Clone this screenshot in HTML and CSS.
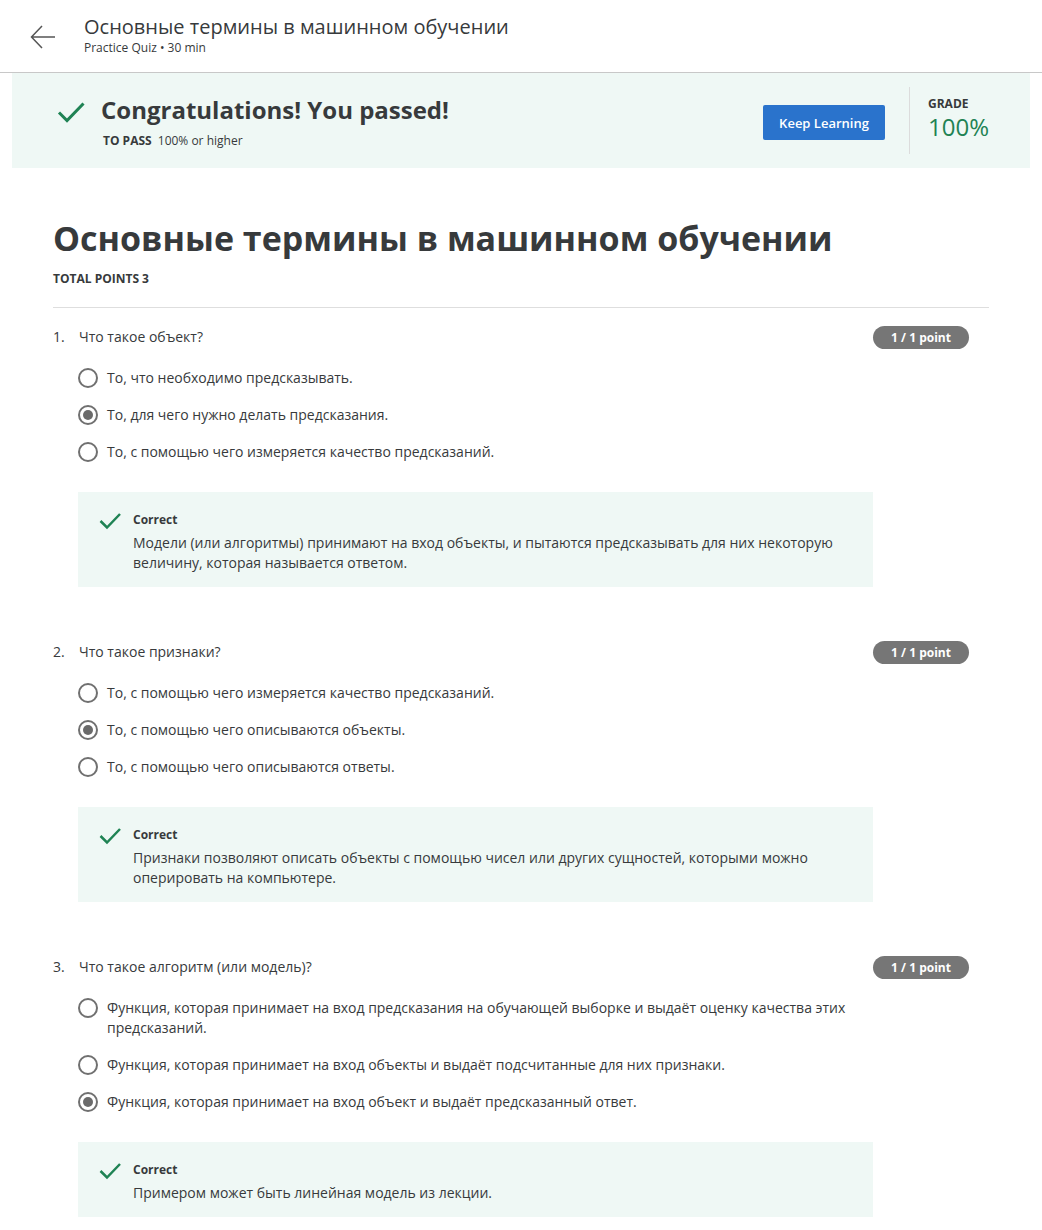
FILE: index.html
```html
<!DOCTYPE html>
<html lang="ru">
<head>
<meta charset="utf-8">
<title>Основные термины в машинном обучении</title>
<link rel="stylesheet" href="styles.css">
</head>
<body>
<header class="topbar">
  <svg class="back" width="26" height="24" viewBox="0 0 26 24"><path d="M25 12H2M12 1L1.5 12L12 23" fill="none" stroke="#555" stroke-width="1.5"/></svg>
  <div class="topbar-text">
    <div class="topbar-title">Основные термины в машинном обучении</div>
    <div class="topbar-sub">Practice Quiz • 30 min</div>
  </div>
</header>

<section class="banner">
  <div class="banner-left">
    <svg class="banner-check" width="28" height="22" viewBox="0 0 28 22"><path d="M2 11.5L10 19.5L26.5 2.5" fill="none" stroke="#1f8354" stroke-width="3"/></svg>
    <div>
      <div class="banner-title">Congratulations! You passed!</div>
      <div class="banner-sub"><b>TO PASS</b> 100% or higher</div>
    </div>
  </div>
  <div class="banner-right">
    <button class="btn">Keep Learning</button>
    <div class="grade">
      <div class="grade-label">GRADE</div>
      <div class="grade-value">100%</div>
    </div>
  </div>
</section>

<main class="content">
  <h1 class="quiz-title">Основные термины в машинном обучении</h1>
  <div class="total">TOTAL POINTS 3</div>
  <hr class="sep">

  <div class="question">
    <div class="q-row">
      <span class="q-num">1.</span>
      <span class="q-text">Что такое объект?</span>
      <span class="badge">1 / 1 point</span>
    </div>
    <div class="options">
      <div class="option"><span class="radio"></span><span class="opt-text">То, что необходимо предсказывать.</span></div>
      <div class="option"><span class="radio checked"></span><span class="opt-text">То, для чего нужно делать предсказания.</span></div>
      <div class="option"><span class="radio"></span><span class="opt-text">То, с помощью чего измеряется качество предсказаний.</span></div>
    </div>
    <div class="feedback">
      <svg class="fb-check" width="22" height="18" viewBox="0 0 22 18"><path d="M1.5 9L8 15.5L21 2" fill="none" stroke="#1f8354" stroke-width="2.5"/></svg>
      <div class="fb-body">
        <div class="fb-title">Correct</div>
        <div class="fb-text">Модели (или алгоритмы) принимают на вход объекты, и пытаются предсказывать для них некоторую величину, которая называется ответом.</div>
      </div>
    </div>
  </div>

  <div class="question">
    <div class="q-row">
      <span class="q-num">2.</span>
      <span class="q-text">Что такое признаки?</span>
      <span class="badge">1 / 1 point</span>
    </div>
    <div class="options">
      <div class="option"><span class="radio"></span><span class="opt-text">То, с помощью чего измеряется качество предсказаний.</span></div>
      <div class="option"><span class="radio checked"></span><span class="opt-text">То, с помощью чего описываются объекты.</span></div>
      <div class="option"><span class="radio"></span><span class="opt-text">То, с помощью чего описываются ответы.</span></div>
    </div>
    <div class="feedback">
      <svg class="fb-check" width="22" height="18" viewBox="0 0 22 18"><path d="M1.5 9L8 15.5L21 2" fill="none" stroke="#1f8354" stroke-width="2.5"/></svg>
      <div class="fb-body">
        <div class="fb-title">Correct</div>
        <div class="fb-text">Признаки позволяют описать объекты с помощью чисел или других сущностей, которыми можно оперировать на компьютере.</div>
      </div>
    </div>
  </div>

  <div class="question">
    <div class="q-row">
      <span class="q-num">3.</span>
      <span class="q-text">Что такое алгоритм (или модель)?</span>
      <span class="badge">1 / 1 point</span>
    </div>
    <div class="options">
      <div class="option"><span class="radio"></span><span class="opt-text">Функция, которая принимает на вход предсказания на обучающей выборке и выдаёт оценку качества этих предсказаний.</span></div>
      <div class="option"><span class="radio"></span><span class="opt-text">Функция, которая принимает на вход объекты и выдаёт подсчитанные для них признаки.</span></div>
      <div class="option"><span class="radio checked"></span><span class="opt-text">Функция, которая принимает на вход объект и выдаёт предсказанный ответ.</span></div>
    </div>
    <div class="feedback">
      <svg class="fb-check" width="22" height="18" viewBox="0 0 22 18"><path d="M1.5 9L8 15.5L21 2" fill="none" stroke="#1f8354" stroke-width="2.5"/></svg>
      <div class="fb-body">
        <div class="fb-title">Correct</div>
        <div class="fb-text">Примером может быть линейная модель из лекции.</div>
      </div>
    </div>
  </div>
</main>
</body>
</html>
```

FILE: styles.css
```css
* { box-sizing: border-box; }
html, body { margin: 0; padding: 0; }
body {
  font-family: "Open Sans", "Noto Sans", sans-serif;
  color: #373a3c;
  background: #fff;
}

.topbar {
  display: flex;
  align-items: flex-start;
  height: 73px;
  padding: 14px 0 0 30px;
  border-bottom: 1px solid #c8c8c8;
}
.back { margin-top: 11px; flex: none; }
.topbar-text { margin-left: 28px; }
.topbar-title { font-size: 20px; line-height: 26px; color: #373a3c; }
.topbar-sub { font-size: 12px; line-height: 16px; color: #373a3c; }

.banner {
  margin: 0 12px;
  background: #eff8f5;
  display: flex;
  justify-content: space-between;
  align-items: center;
  height: 95px;
}
.banner-left {
  display: flex;
  align-items: flex-start;
  padding-left: 45px;
  padding-top: 2px;
}
.banner-check { margin-top: 6px; margin-right: 16px; flex: none; }
.banner-title { font-size: 24px; line-height: 30px; font-weight: 700; color: #373a3c; }
.banner-sub { font-size: 12px; line-height: 16px; margin-top: 8px; margin-left: 2px; }
.banner-sub b { font-weight: 700; margin-right: 3px; }

.banner-right { display: flex; align-items: center; }
.btn {
  width: 122px;
  height: 35px;
  background: #2a73cc;
  color: #fff;
  border: none;
  border-radius: 2px;
  font-family: "Open Sans", sans-serif;
  font-size: 13px;
  font-weight: 600;
  margin-top: 4px;
  margin-right: 24px;
  padding: 0;
}
.grade {
  width: 121px;
  height: 67px;
  border-left: 1px solid #dcdcdc;
  padding: 9px 0 0 18px;
}
.grade-label { font-size: 12px; line-height: 16px; font-weight: 700; color: #373a3c; }
.grade-value { font-size: 24px; line-height: 26px; margin-top: 2px; color: #1f8354; }

.content { padding: 0 53px; }
.quiz-title {
  margin: 48px 0 0;
  font-size: 34px;
  line-height: 44px;
  font-weight: 700;
  color: #373a3c;
}
.total { font-size: 12px; line-height: 16px; font-weight: 700; margin-top: 11px; }
.sep { border: none; border-top: 1px solid #dedede; margin: 20px 0 19px; }

.question { margin-bottom: 55px; }
.q-row { display: flex; align-items: center; height: 20px; }
.q-num { width: 26px; font-size: 14px; line-height: 20px; }
.q-text { flex: 1; font-size: 14px; line-height: 20px; }
.badge {
  width: 96px;
  height: 23px;
  border-radius: 12px;
  background: #767676;
  color: #fff;
  font-size: 12px;
  font-weight: 700;
  line-height: 23px;
  text-align: center;
  margin-right: 20px;
}

.options { margin: 21px 0 0 25px; width: 795px; }
.option { display: flex; align-items: flex-start; margin-bottom: 17px; }
.option:last-child { margin-bottom: 0; }
.radio {
  flex: none;
  width: 20px;
  height: 20px;
  border: 2px solid #707070;
  border-radius: 50%;
  margin-right: 9px;
  position: relative;
}
.radio.checked::after {
  content: "";
  position: absolute;
  left: 3px; top: 3px;
  width: 10px; height: 10px;
  border-radius: 50%;
  background: #6a6a6a;
}
.opt-text { font-size: 14px; line-height: 20px; color: #373a3c; }

.feedback {
  margin: 30px 0 0 25px;
  width: 795px;
  background: #eff8f5;
  display: flex;
  align-items: flex-start;
  padding: 20px 20px 14px 21px;
}
.fb-check { flex: none; margin-right: 12px; margin-top: 0; }
.fb-title { font-size: 12px; line-height: 16px; font-weight: 700; }
.fb-text { font-size: 14px; line-height: 20px; margin-top: 5px; }
```
